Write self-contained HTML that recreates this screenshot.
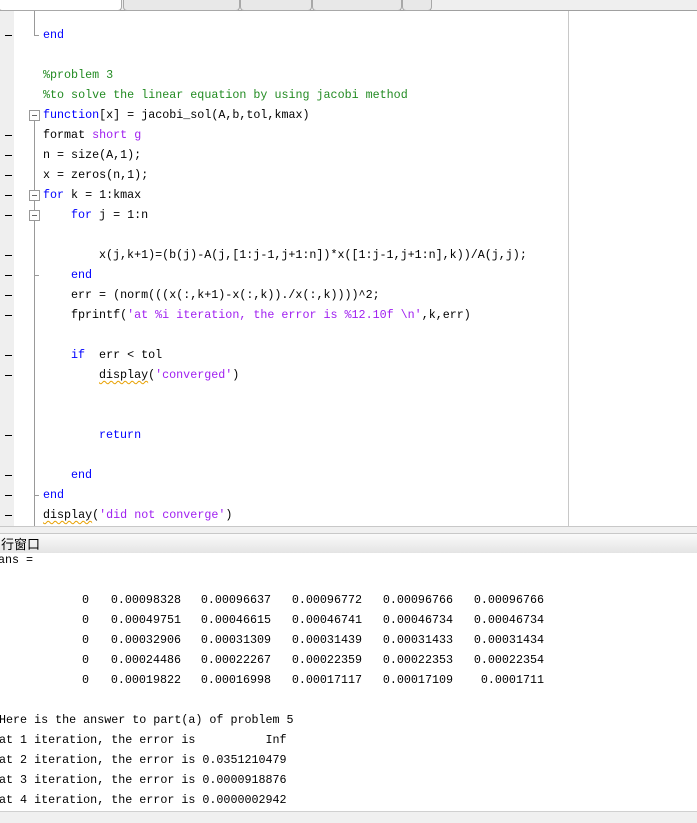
<!DOCTYPE html>
<html><head><meta charset="utf-8"><style>
*{margin:0;padding:0;box-sizing:border-box}
body{width:697px;height:823px;overflow:hidden;background:#fff;position:relative;font-family:"Liberation Mono",monospace;font-size:11.7px;color:#000}
.tabs{position:absolute;left:0;top:0;width:697px;height:11px;background:#efefef;border-bottom:1px solid #a0a0a0}
.tab{position:absolute;top:-8px;height:19px;border:1px solid #a8a8a8;border-top:none;border-radius:0 0 4px 4px;background:#e8e8e8}
.gut{position:absolute;left:0;top:11px;width:14px;height:515px;background:#efefef}
.ed{position:absolute;left:0;top:11px;width:697px;height:516px;border-bottom:1px solid #c8c8c8}
.margin{position:absolute;left:568px;top:11px;width:1px;height:515px;background:#c8c8c8}
.ln{position:absolute;white-space:pre;line-height:20px;height:20px}
.d{position:absolute;left:5px;width:7px;height:1px;background:#000}
.k{color:#0000ff}.c{color:#228b22}.s{color:#a020f0}
.fl{position:absolute;left:34px;width:1px;background:#999}
.fb{position:absolute;left:29px;width:11px;height:11px;border:1px solid #999;background:#fff}
.fb:after{content:"";position:absolute;left:2px;top:4px;width:5px;height:1px;background:#666}
.sq{text-decoration:underline wavy #e8a000;text-decoration-thickness:1px;text-underline-offset:2px}
.gap{position:absolute;left:0;top:527px;width:697px;height:7px;background:#f0f0f0;border-bottom:1px solid #c8c8c8}
.title{position:absolute;left:0;top:534px;width:697px;height:19px;background:linear-gradient(#fafafa,#e4e4e4);font-family:"Noto Sans CJK SC",sans-serif;font-size:13px;line-height:19px;padding-left:1px}
.cmd .ln{left:0}
.n{position:absolute;white-space:pre;line-height:20px;text-align:right}
.bot{position:absolute;left:0;top:811px;width:697px;height:12px;background:#f0f0f0;border-top:1px solid #d0d0d0}
</style></head><body>
<div class="tabs">
<div class="tab" style="left:-2px;width:124px;background:#fff"></div>
<div class="tab" style="left:123px;width:117px"></div>
<div class="tab" style="left:240px;width:72px"></div>
<div class="tab" style="left:312px;width:90px"></div>
<div class="tab" style="left:402px;width:30px"></div>
</div>
<div class="gut"></div>
<div class="ed"></div>
<div class="margin"></div>
<!-- fold lines -->
<div class="fl" style="top:11px;height:24px"></div>
<div style="position:absolute;left:34px;top:35px;width:5px;height:1px;background:#999"></div>
<div class="fl" style="top:121px;height:405px"></div>
<div class="fb" style="top:110px"></div>
<div class="fb" style="top:190px"></div>
<div class="fb" style="top:210px"></div>
<div style="position:absolute;left:34px;top:275px;width:5px;height:1px;background:#999"></div>
<div style="position:absolute;left:34px;top:495px;width:5px;height:1px;background:#999"></div>
<!-- dashes -->
<div class="d" style="top:35px"></div>
<div class="d" style="top:135px"></div><div class="d" style="top:155px"></div><div class="d" style="top:175px"></div>
<div class="d" style="top:195px"></div><div class="d" style="top:215px"></div><div class="d" style="top:255px"></div>
<div class="d" style="top:275px"></div><div class="d" style="top:295px"></div><div class="d" style="top:315px"></div>
<div class="d" style="top:355px"></div><div class="d" style="top:375px"></div><div class="d" style="top:435px"></div>
<div class="d" style="top:475px"></div><div class="d" style="top:495px"></div><div class="d" style="top:515px"></div>
<!-- code -->
<div class="ln k" style="left:43px;top:25px">end</div>
<div class="ln c" style="left:43px;top:65px">%problem 3</div>
<div class="ln c" style="left:43px;top:85px">%to solve the linear equation by using jacobi method</div>
<div class="ln" style="left:43px;top:105px"><span class="k">function</span>[x] = jacobi_sol(A,b,tol,kmax)</div>
<div class="ln" style="left:43px;top:125px">format <span class="s">short g</span></div>
<div class="ln" style="left:43px;top:145px">n = size(A,1);</div>
<div class="ln" style="left:43px;top:165px">x = zeros(n,1);</div>
<div class="ln" style="left:43px;top:185px"><span class="k">for</span> k = 1:kmax</div>
<div class="ln" style="left:71px;top:205px"><span class="k">for</span> j = 1:n</div>
<div class="ln" style="left:99px;top:245px">x(j,k+1)=(b(j)-A(j,[1:j-1,j+1:n])*x([1:j-1,j+1:n],k))/A(j,j);</div>
<div class="ln k" style="left:71px;top:265px">end</div>
<div class="ln" style="left:71px;top:285px">err = (norm(((x(:,k+1)-x(:,k))./x(:,k))))^2;</div>
<div class="ln" style="left:71px;top:305px">fprintf(<span class="s">'at %i iteration, the error is %12.10f \n'</span>,k,err)</div>
<div class="ln" style="left:71px;top:345px"><span class="k">if</span>  err &lt; tol</div>
<div class="ln" style="left:99px;top:365px"><span class="sq">display</span>(<span class="s">'converged'</span>)</div>
<div class="ln k" style="left:99px;top:425px">return</div>
<div class="ln k" style="left:71px;top:465px">end</div>
<div class="ln k" style="left:43px;top:485px">end</div>
<div class="ln" style="left:43px;top:505px"><span class="sq">display</span>(<span class="s">'did not converge'</span>)</div>
<div class="gap"></div>
<div class="title">行窗口</div>
<div class="cmd">
<div class="ln" style="left:-2px;top:550px">ans =</div>
<div class="n" style="right:608px;top:590px">0</div><div class="n" style="right:516px;top:590px">0.00098328</div><div class="n" style="right:426px;top:590px">0.00096637</div><div class="n" style="right:335px;top:590px">0.00096772</div><div class="n" style="right:244px;top:590px">0.00096766</div><div class="n" style="right:153px;top:590px">0.00096766</div>
<div class="n" style="right:608px;top:610px">0</div><div class="n" style="right:516px;top:610px">0.00049751</div><div class="n" style="right:426px;top:610px">0.00046615</div><div class="n" style="right:335px;top:610px">0.00046741</div><div class="n" style="right:244px;top:610px">0.00046734</div><div class="n" style="right:153px;top:610px">0.00046734</div>
<div class="n" style="right:608px;top:630px">0</div><div class="n" style="right:516px;top:630px">0.00032906</div><div class="n" style="right:426px;top:630px">0.00031309</div><div class="n" style="right:335px;top:630px">0.00031439</div><div class="n" style="right:244px;top:630px">0.00031433</div><div class="n" style="right:153px;top:630px">0.00031434</div>
<div class="n" style="right:608px;top:650px">0</div><div class="n" style="right:516px;top:650px">0.00024486</div><div class="n" style="right:426px;top:650px">0.00022267</div><div class="n" style="right:335px;top:650px">0.00022359</div><div class="n" style="right:244px;top:650px">0.00022353</div><div class="n" style="right:153px;top:650px">0.00022354</div>
<div class="n" style="right:608px;top:670px">0</div><div class="n" style="right:516px;top:670px">0.00019822</div><div class="n" style="right:426px;top:670px">0.00016998</div><div class="n" style="right:335px;top:670px">0.00017117</div><div class="n" style="right:244px;top:670px">0.00017109</div><div class="n" style="right:153px;top:670px">0.0001711</div>
<div class="ln" style="left:-1px;top:710px">Here is the answer to part(a) of problem 5</div>
<div class="ln" style="left:-1px;top:730px">at 1 iteration, the error is          Inf</div>
<div class="ln" style="left:-1px;top:750px">at 2 iteration, the error is 0.0351210479</div>
<div class="ln" style="left:-1px;top:770px">at 3 iteration, the error is 0.0000918876</div>
<div class="ln" style="left:-1px;top:790px">at 4 iteration, the error is 0.0000002942</div>
</div>
<div class="bot"></div>
</body></html>
